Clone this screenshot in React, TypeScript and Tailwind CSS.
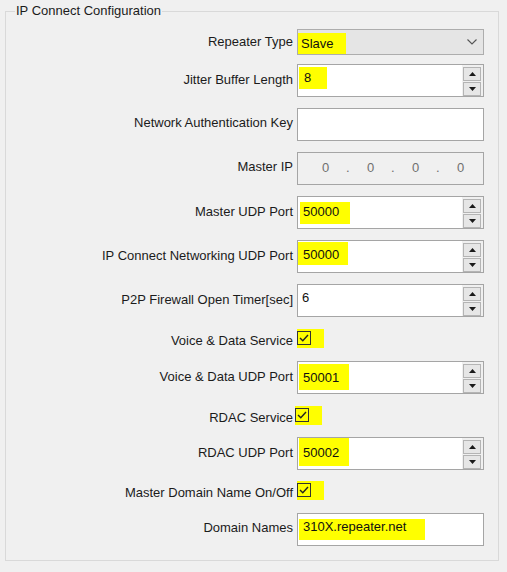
import React from 'react';

const FONT = "font-['Liberation_Sans',Arial,sans-serif]";

function Label({ children }: { children: React.ReactNode }) {
  return <div className="text-right leading-[15px] text-[#1b1b1b] whitespace-nowrap">{children}</div>;
}

function Hl({ children, className = '' }: { children: React.ReactNode; className?: string }) {
  return <span className={`bg-[#ffff00] ${className}`}>{children}</span>;
}

function SpinButtons() {
  return (
    <div className="flex w-[21px] flex-col gap-[1px] bg-[#f0f0f0] pt-[2px] pl-[1px]">
      <div className="flex h-[14px] w-[18px] items-center justify-center border border-[#b4b4b4] bg-[#e6e6e6]">
        <svg width="7" height="4" viewBox="0 0 7 4">
          <path d="M0 4 L3.5 0 L7 4 Z" fill="#1a1a1a" />
        </svg>
      </div>
      <div className="flex h-[14px] w-[18px] items-center justify-center border border-[#b4b4b4] bg-[#e6e6e6]">
        <svg width="7" height="4" viewBox="0 0 7 4">
          <path d="M0 0 L7 0 L3.5 4 Z" fill="#1a1a1a" />
        </svg>
      </div>
    </div>
  );
}

function SpinRow({ label, value, mt }: { label: string; value: React.ReactNode; mt: string }) {
  return (
    <div className={`grid grid-cols-[287px_187px] gap-x-[4px] ${mt}`}>
      <div className="pt-[8px]">
        <Label>{label}</Label>
      </div>
      <div className="flex h-[33px] border border-[#a5a5a5] bg-white">
        <div className="flex-1 pl-[4px] pt-[5px] leading-[15px] text-[#111]">{value}</div>
        <SpinButtons />
      </div>
    </div>
  );
}

function TextRow({ label, value, mt, grey = false }: { label: string; value?: React.ReactNode; mt: string; grey?: boolean }) {
  return (
    <div className={`grid grid-cols-[287px_187px] gap-x-[4px] ${mt}`}>
      <div className="pt-[7px]">
        <Label>{label}</Label>
      </div>
      <div
        className={`h-[33px] border border-[#a5a5a5] pl-[4px] pt-[5px] leading-[15px] text-[#111] ${
          grey ? 'bg-[#f0f0f0]' : 'bg-white'
        }`}
      >
        {value}
      </div>
    </div>
  );
}

function CheckRow({ label, mt, boxMl = 'ml-0' }: { label: string; mt: string; boxMl?: string }) {
  return (
    <div className={`grid h-[14px] grid-cols-[287px_187px] gap-x-[4px] ${mt}`}>
      <div className="pt-[2px]">
        <Label>{label}</Label>
      </div>
      <div className={`flex ${boxMl}`}>
        <div className="-my-[2px] flex h-[19px] w-[27px] items-start bg-[#ffff00] pt-[2px]">
          <div className="flex h-[14px] w-[14px] items-center justify-center border border-[#333]">
            <svg width="10" height="8" viewBox="0 0 10 8">
              <path d="M1 4 L3.8 6.8 L9 1" fill="none" stroke="#222" strokeWidth="1.4" />
            </svg>
          </div>
        </div>
      </div>
    </div>
  );
}

export default function App() {
  return (
    <div className={`min-h-[572px] w-[507px] bg-[#f0f0f0] pt-[11px] text-[13px] ${FONT}`}>
      <div className="relative ml-[5px] h-[550px] w-[494px] border border-[#d9d9d9] pt-[17px]">
        <div className="absolute left-[9px] top-[-9px] bg-[#f0f0f0] px-[1px] leading-[15px] text-[#1b1b1b]">
          IP Connect Configuration
        </div>

        {/* Repeater Type */}
        <div className="grid grid-cols-[287px_187px] gap-x-[4px]">
          <div className="pt-[5px]">
            <Label>Repeater Type</Label>
          </div>
          <div className="flex h-[26px] items-center justify-between border border-[#adadad] bg-[#e5e5e5] pr-[6px]">
            <Hl className="ml-0 mt-[2px] h-[21px] pl-[3px] pr-[12px] pt-[3px] leading-[15px] text-[#111]">Slave</Hl>
            <svg width="10" height="6" viewBox="0 0 10 6">
              <path d="M0.5 0.5 L5 5 L9.5 0.5" fill="none" stroke="#555" strokeWidth="1.1" />
            </svg>
          </div>
        </div>

        <SpinRow
          label="Jitter Buffer Length"
          mt="mt-[9px]"
          value={<Hl className="-ml-[3px] -mt-[3px] inline-block h-[22px] w-[28px] pl-[5px] pt-[3px]">8</Hl>}
        />
        <TextRow label="Network Authentication Key" mt="mt-[11px]" />
        <TextRow
          label="Master IP"
          mt="mt-[11px]"
          grey
          value={
            <div className="flex pl-[20px] pt-[2px] text-[#6f6f6f]">
              <span className="w-[24px]">0</span>
              <span className="w-[21px]">.</span>
              <span className="w-[24px]">0</span>
              <span className="w-[21px]">.</span>
              <span className="w-[24px]">0</span>
              <span className="w-[21px]">.</span>
              <span>0</span>
            </div>
          }
        />
        <SpinRow
          label="Master UDP Port"
          mt="mt-[11px]"
          value={<Hl className="-ml-[2px] inline-block h-[22px] w-[50px] pl-[3px] pt-[2px]">50000</Hl>}
        />
        <SpinRow
          label="IP Connect Networking UDP Port"
          mt="mt-[11px]"
          value={<Hl className="-ml-[4px] -mt-[4px] inline-block h-[23px] w-[50px] pl-[5px] pt-[5px]">50000</Hl>}
        />
        <SpinRow label="P2P Firewall Open Timer[sec]" mt="mt-[11px]" value="6" />
        <CheckRow label="Voice & Data Service" mt="mt-[14px]" />
        <SpinRow
          label="Voice & Data UDP Port"
          mt="mt-[16px]"
          value={<Hl className="-ml-[3px] -mt-[3px] inline-block h-[26px] w-[50px] pl-[4px] pt-[6px]">50001</Hl>}
        />
        <CheckRow label="RDAC Service" mt="mt-[14px]" boxMl="-ml-[2px]" />
        <SpinRow
          label="RDAC UDP Port"
          mt="mt-[15px]"
          value={<Hl className="-ml-[3px] -mt-[5px] inline-block h-[28px] w-[50px] pl-[4px] pt-[7px]">50002</Hl>}
        />
        <CheckRow label="Master Domain Name On/Off" mt="mt-[13px]" />
        <TextRow
          label="Domain Names"
          mt="mt-[16px]"
          value={<Hl className="-ml-[3px] -mt-[1px] inline-block h-[21px] w-[126px] pl-[4px]">310X.repeater.net</Hl>}
        />
      </div>
    </div>
  );
}
